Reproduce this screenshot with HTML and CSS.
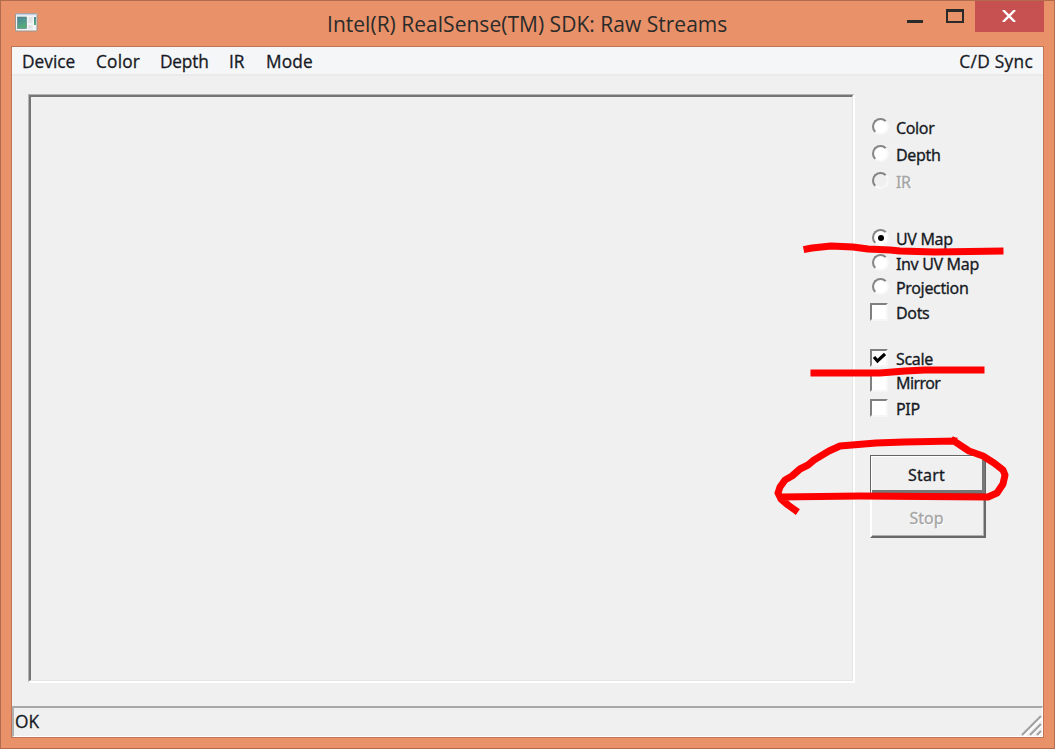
FILE: index.html
```
<!DOCTYPE html>
<html lang="en">
<head>
<meta charset="utf-8">
<title>Intel(R) RealSense(TM) SDK: Raw Streams</title>
<link rel="stylesheet" href="styles.css">
</head>
<body>
<div class="window">
  <header class="titlebar">
    <svg class="app-icon" width="23" height="19" viewBox="0 0 23 19">
      <defs><linearGradient id="g" x1="0" y1="0" x2="0.4" y2="1"><stop offset="0" stop-color="#4a82a2"/><stop offset="1" stop-color="#58ad76"/></linearGradient></defs>
      <rect x=".5" y=".5" width="21.5" height="17.5" rx="1" fill="#f3f4f5" stroke="#989593"/>
      <path d="M1 1.5H22" stroke="#c5d0e0" stroke-width="1.5"/>
      <rect x="2.5" y="4" width="9" height="11.5" fill="url(#g)" stroke="#557c7e" stroke-width=".6"/>
      <path d="M13.5 4h4v6h-4zM13.5 12h4v4h-4z" fill="#e2e3e4"/>
      <rect x="19" y="4" width="2" height="8" fill="url(#g)"/>
    </svg>
    <h1 class="title"><span>Intel(R) RealSense(TM) SDK: Raw Streams</span></h1>
    <div class="captions">
      <svg width="69" height="31" viewBox="0 0 69 31" shape-rendering="crispEdges"><rect x="1" y="19" width="16" height="3" fill="#2b2a2a"/><path d="M41 10h16v11H41z" fill="none" stroke="#2b2a2a" stroke-width="2"/><path d="M40 9.5h18" stroke="#2b2a2a" stroke-width="3"/></svg>
      <div class="close"><svg width="14" height="12" viewBox="0 0 14 12"><path d="M1 0L13 12M13 0L1 12" stroke="#fff" stroke-width="2.4"/></svg></div>
    </div>
  </header>
  <main class="client">
    <nav class="menu">
      <span class="m-device">Device</span><span class="m-color">Color</span><span class="m-depth">Depth</span><span class="m-ir">IR</span><span class="m-mode">Mode</span><span class="m-sync">C/D Sync</span>
    </nav>
    <div class="content">
      <div class="view"><div class="view-inner"></div></div>
      <div class="panel">
        <div class="row"><i class="radio"></i><span>Color</span></div>
        <div class="row g3"><i class="radio"></i><span>Depth</span></div>
        <div class="row g3 off"><i class="radio"></i><span>IR</span></div>
        <div class="row g33"><i class="radio on"></i><span>UV Map</span></div>
        <div class="row g1"><i class="radio"></i><span>Inv UV Map</span></div>
        <div class="row"><i class="radio"></i><span>Projection</span></div>
        <div class="row g1"><i class="check"></i><span>Dots</span></div>
        <div class="row g22"><i class="check"><svg width="14" height="14" viewBox="0 0 14 14"><path d="M2 6L5.5 10L13 3" fill="none" stroke="#000" stroke-width="3.2"/></svg></i><span>Scale</span></div>
        <div class="row g1"><i class="check"></i><span class="t-mirror">Mirror</span></div>
        <div class="row g1"><i class="check"></i><span>PIP</span></div>
        <div class="button start"><span>Start</span></div>
        <div class="button stop"><span>Stop</span></div>
      </div>
    </div>
    <footer class="status"><span>OK</span>
      <svg class="grip" width="22" height="22" viewBox="0 0 22 22"><path d="M4 22L22 4M11 22L22 11M18 22L22 18" stroke="#fff" stroke-width="2"/><path d="M2 21L21 2M10 21L21 10M17 21L21 17" stroke="#a2a2a2" stroke-width="2.2"/></svg>
    </footer>
  </main>
</div>
<svg class="ink" width="1055" height="749" viewBox="0 0 1055 749">
  <path d="M807 249L812 248L831 246L853 247L868 249L890 250L900 251L935 252L1000 251"/>
  <path d="M814 373L880 373L905 371L925 370L981 370"/>
  <path d="M954 441L904 442L876 443L840 446L829 451L814 460L808 465L800 469L792 476L785 480L780 487L778 493L781 499L788 505L795 510M781 497L860 496L988 497L997 493L1003 484L1005 475L1003 470L994 463L983 456L969 451L954 441"/>
</svg>
</body>
</html>
```
FILE: styles.css
```
* { box-sizing: border-box; }
body { margin: 0; overflow: hidden; font-family: "Noto Sans", "Open Sans", sans-serif; color: #171a24; }
.window { width: 1055px; height: 749px; background: #e99168; border: 1px solid #b26b4d; display: flex; flex-direction: column; padding: 0 10px 10px; }
.titlebar { height: 45px; flex: none; display: flex; align-items: flex-start; }
.app-icon { margin: 12px 0 0 4px; flex: none; }
.title { flex: 1; margin: 0 0 0 289px; height: 45px; font: 400 21px/47px "Open Sans", sans-serif; color: #2b2b2b; white-space: nowrap; letter-spacing: .02px; }
.captions { display: flex; flex: none; }
.close { width: 69px; height: 31px; background: #c75050; display: flex; align-items: center; justify-content: center; padding: 0 2px 2px 0; }
.client { flex: 1; border: 1px solid #c07656; background: #f0f0f0; display: flex; flex-direction: column; }
.menu { height: 29px; flex: none; display: flex; background: #f5f6f8; border-bottom: 2px solid #eaeaea; padding: 0 10px 0 10px; font: 17.3px/29px "Open Sans", sans-serif; white-space: nowrap; -webkit-text-stroke: .3px currentColor; }
.m-device { width: 74px; }
.m-color { width: 64px; letter-spacing: .2px; }
.m-depth { width: 69px; letter-spacing: -.2px; }
.m-ir { width: 37px; }
.m-mode { letter-spacing: .2px; }
.m-sync { margin-left: auto; letter-spacing: .3px; }
.content { flex: 1; display: flex; min-height: 0; }
.view { width: 827px; height: 589px; margin: 18px 0 0 16px; border: 1px solid; border-color: #b4b4b4 #fff #fff #b4b4b4; border-right-width: 2px; border-bottom-width: 2px; flex: none; }
.view-inner { height: 100%; border: 2px solid; border-color: #757575 #e5e5e5 #e5e5e5 #757575; border-right-width: 1px; border-bottom-width: 1px; }
.panel { padding: 38px 0 0 15px; width: 132px; }
.row { height: 24px; display: flex; align-items: center; font-size: 16px; line-height: 24px; white-space: nowrap; letter-spacing: -.35px; -webkit-text-stroke: .3px currentColor; }
.row span { position: relative; top: 2px; margin-left: 8px; }
.row .t-mirror { letter-spacing: -.6px; top: 1px; }
.g1 { margin-top: 1px; }
.g3 { margin-top: 3px; }
.g22 { margin-top: 22px; }
.g33 { margin-top: 33px; }
.radio { width: 17px; height: 17px; margin: 1px -1px 0 2px; border: 2px solid; border-color: #858585 #f8f8f8 #f8f8f8 #858585; border-radius: 50%; background: #fff; flex: none; display: flex; align-items: center; justify-content: center; }
.on::after { content: ""; width: 6px; height: 6px; border-radius: 50%; background: #000; }
.off { color: #a5a5a5; text-shadow: 1px 1px #fff; }
.off .radio { background: #f0f0f0; }
.check { width: 18px; height: 18px; flex: none; background: #fff; border: 2px solid; border-color: #808080 #f6f6f6 #f6f6f6 #808080; display: flex; margin-top: 1px; }
.button { width: 116px; display: flex; align-items: center; justify-content: center; font-size: 16px; -webkit-text-stroke: .3px currentColor; padding-right: 3px; }
.start { height: 39px; margin-top: 36px; border: 1px solid #646464; box-shadow: inset 1px 1px #fff, inset -3px -3px #777; letter-spacing: .2px; }
.stop { height: 44px; padding-top: 3px; border: 2px solid; border-color: #fff #696969 #696969 #fff; color: #a5a5a5; text-shadow: 1px 1px #fff; box-shadow: inset -1px -1px #b0b0b0; }
.status { height: 31px; flex: none; border-top: 2px solid #a8a8a8; border-left: 2px solid #b0b0b0; border-right: 1px solid #fff; border-bottom: 1px solid #fff; display: flex; align-items: flex-end; font: 17.3px/28px "Open Sans", sans-serif; -webkit-text-stroke: .3px currentColor; padding-left: 1px; }
.grip { margin-left: auto; }
.ink { position: absolute; left: 0; top: 0; fill: none; stroke: #f00; stroke-width: 7; stroke-linejoin: round; stroke-linecap: square; }
```
